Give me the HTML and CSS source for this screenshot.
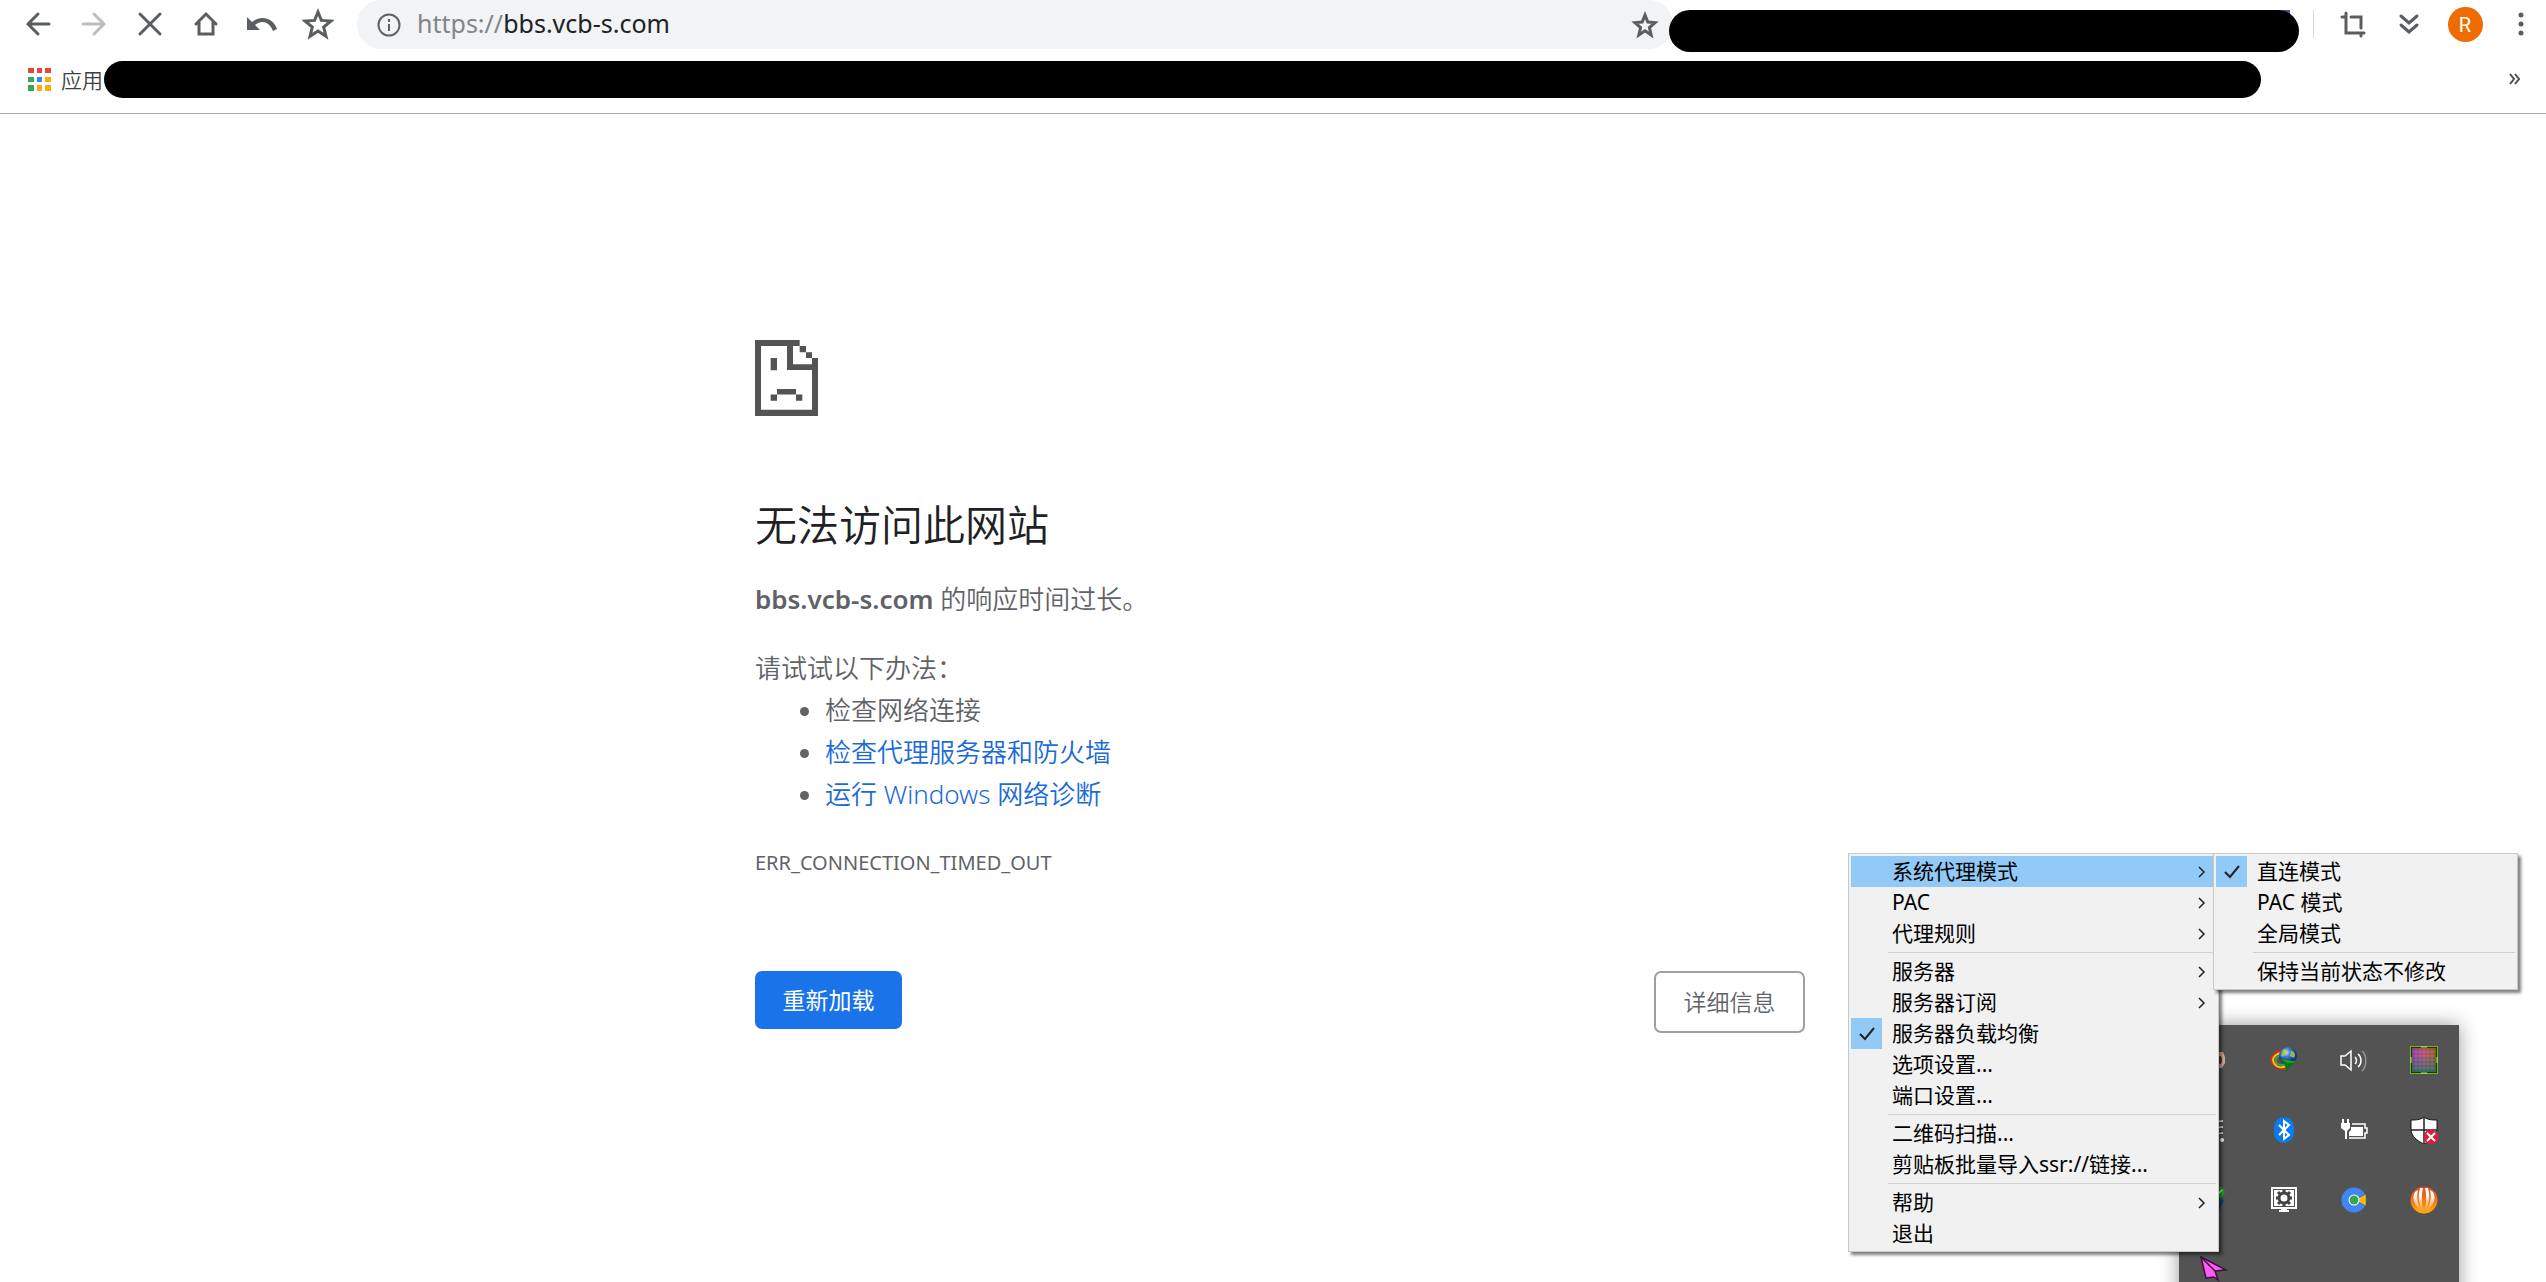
FILE: index.html
```html
<!DOCTYPE html>
<html lang="zh-CN">
<head>
<meta charset="utf-8">
<title>bbs.vcb-s.com</title>
<link rel="stylesheet" href="styles.css">
</head>
<body>
<header class="browser">
  <div class="toolbar">
    <nav class="nav-buttons">
      <button class="icon-btn" aria-label="后退"><svg viewBox="0 0 32 32"><path d="M27 16H6M16 6 6 16l10 10"/></svg></button>
      <button class="icon-btn faded" aria-label="前进"><svg viewBox="0 0 32 32"><path d="M5 16h21M16 6l10 10-10 10"/></svg></button>
      <button class="icon-btn" aria-label="停止"><svg viewBox="0 0 32 32"><path d="M6 6l20 20M26 6 6 26"/></svg></button>
      <button class="icon-btn" aria-label="主页"><svg viewBox="0 0 32 32"><path d="M6 16 16 6l10 10M9 14v12h14V14"/></svg></button>
      <button class="icon-btn" aria-label="撤销"><svg viewBox="0 0 32 32"><path class="solid" d="M1 9v13h13l-5-5c6-5 14-4 18 6l4-2C27 9 14 7 6 14z"/></svg></button>
      <button class="icon-btn" aria-label="收藏夹"><svg viewBox="0 0 32 32"><path class="star" d="m16 4 3.400 8.400 9.600.6-7.300 6 2.300 9.300-8-5.300-8 5.300L10.300 19 3 13l9.600-.6z"/></svg></button>
    </nav>
    <div class="omnibox">
      <svg class="info" viewBox="0 0 24 24"><circle cx="12" cy="12" r="10.500"/><path d="M12 11v7M12 6v3"/></svg>
      <div class="url"><span class="scheme">https://</span>bbs.vcb-s.com</div>
      <button class="bookmark" aria-label="为此标签页添加书签"><svg viewBox="0 0 32 32"><path class="star" d="m16 6 2.800 7 7.200.6-5.600 4.900 1.800 7.500-6.200-4.200L9.800 26l1.800-7.500L6 13.600l7.200-.6z"/></svg></button>
    </div>
    <div class="redacted extensions"></div>
    <div class="actions">
      <button class="icon-btn" aria-label="裁剪"><svg viewBox="0 0 32 32"><path d="M5 9h4M9 5v20h18M14 9h10v11M24 25v3"/></svg></button>
      <button class="icon-btn" aria-label="更多扩展"><svg viewBox="0 0 32 32"><path d="m8 8 8 7 8-7M8 17l8 7 8-7"/></svg></button>
      <button class="icon-btn" aria-label="用户"><span class="avatar">R</span></button>
      <button class="icon-btn" aria-label="菜单"><svg viewBox="0 0 32 32"><circle class="solid" cx="16" cy="7" r="2.500"/><circle class="solid" cx="16" cy="16" r="2.500"/><circle class="solid" cx="16" cy="25" r="2.500"/></svg></button>
    </div>
  </div>
  <div class="bookmarks">
    <a class="apps" href="#"><svg viewBox="0 0 23 23"><g fill="#ea4335"><path d="M0 0h6v5H0zM9 0h5v5H9zM17 0h6v5h-6z"/></g><g fill="#34a853"><path d="M0 9h6v5H0zM0 17h6v6H0z"/></g><path fill="#2b8cf5" d="M9 9h5v5H9z"/><path fill="#fbab0a" d="M17 9h6v5h-6zM9 17h5v6H9zM17 17h6v6h-6z"/></svg>应用</a>
    <div class="redacted saved"></div>
    <button class="overflow" aria-label="更多书签"><svg viewBox="0 0 12 12"><path d="m1 1 4 5-4 5M6 1l4 5-4 5"/></svg></button>
  </div>
</header>

<main class="error">
  <svg class="sad" viewBox="0 0 189 206" preserveAspectRatio="none"><path d="M0 0h134v16H18v173h153V81H96V16h18v50h57V49h18v157H0zM134 16h19v17h-19zM153 33h18v16h-18zM47 49h19v33H47zM66 133h57v15H66zM47 148h19v17H47zM123 148h19v17h-19z"/></svg>
  <h1>无法访问此网站</h1>
  <p class="reason"><strong>bbs.vcb-s.com</strong> 的响应时间过长。</p>
  <p class="try">请试试以下办法：</p>
  <ul>
    <li>检查网络连接</li>
    <li><a href="#">检查代理服务器和防火墙</a></li>
    <li><a href="#">运行 Windows 网络诊断</a></li>
  </ul>
  <p class="code">ERR_CONNECTION_TIMED_OUT</p>
  <div class="buttons">
    <button class="reload">重新加载</button>
    <button class="details">详细信息</button>
  </div>
</main>

<aside class="tray">
  <span class="cell"><svg viewBox="0 0 28 28"><path fill="#2b2522" d="M8 5c8-3 15 1 16 8s-4 9-10 9z"/><path fill="#d2ae97" d="M17 6h6l2 5v6l-3 5h-5z"/><ellipse cx="20" cy="14" rx="2" ry="4" fill="#4a3a33"/></svg></span>
  <span class="cell"><svg viewBox="0 0 28 28"><defs><radialGradient id="globe" cx=".4" cy=".3"><stop offset="0" stop-color="#dff0ff"/><stop offset=".4" stop-color="#4b8ad8"/><stop offset="1" stop-color="#123a8a"/></radialGradient></defs><g fill="none" stroke-width="2"><path stroke="#d62a1a" d="M14 5C5 4-1 12 2 17s10 7 15 5"/><path stroke="#f5c518" d="M13 7c-7 0-12 5-9 10s8 5 12 3"/><path stroke="#3fa535" d="M13 9c-6 0-8 4-7 7s6 4 10 2"/></g><circle cx="18" cy="10" r="9" fill="url(#globe)"/><path fill="#b9c94a" fill-opacity=".8" d="M13 4c4-2 6 1 3 4s-4 4-5 1zM21 5c4 0 5 4 3 7l-4-2z"/><path fill="#06780c" d="m10 13 18 3-7 3-5 7-1-7z"/><path fill="#22a52a" d="m10 13 18 3-10 1z"/></svg></span>
  <span class="cell"><svg viewBox="0 0 28 28"><g fill="none" stroke="#fff" stroke-width="1.500"><path d="M1 10h4l6-5v19l-6-5H1z"/><path d="M15 11c2 2 2 5 0 7M18 8c4 3 4 10 0 13"/><path stroke="#999" d="M22 5c5 4 5 15 0 20"/></g></svg></span>
  <span class="cell"><svg viewBox="0 0 28 28"><defs><linearGradient id="chipx"><stop offset="0" stop-color="#8c3aa0"/><stop offset=".5" stop-color="#b0506a"/><stop offset="1" stop-color="#8a5a20"/></linearGradient><linearGradient id="chipy" x2="0" y2="1"><stop offset=".3" stop-color="#2a5a70" stop-opacity="0"/><stop offset="1" stop-color="#2a6a60"/></linearGradient></defs><path fill="#1d3307" stroke="#76b900" d="M.5.5h27v27H.5z"/><path fill="url(#chipx)" d="M2 2h24v24H2z"/><path fill="url(#chipy)" d="M2 2h24v24H2z"/><path stroke="#c8b0c8" stroke-opacity=".25" d="M6 3v22M10 3v22M14 3v22M18 3v22M22 3v22M3 6h22M3 10h22M3 14h22M3 18h22M3 22h22"/><path stroke="#c5ea60" d="M11 1h6M11 27h6M1 11v6M27 11v6"/></svg></span>
  <span class="cell"><svg viewBox="0 0 28 28"><g fill="none" stroke="#fff" stroke-width="1.500"><path d="M3 23C3 10 12 5 23 5M8 23c0-8 6-12 15-12M13 23c0-4 4-6 10-6"/></g><circle cx="22" cy="24" r="2" fill="#fff"/></svg></span>
  <span class="cell"><svg viewBox="0 0 28 28"><rect x="4" y="1" width="20" height="26" rx="10" fill="#0a7cf0"/><path fill="none" stroke="#fff" stroke-width="2" d="m9 9 10 10-5 4V5l5 4L9 19"/></svg></span>
  <span class="cell"><svg viewBox="0 0 28 28"><path fill="#fff" d="M2 3h2v4h3V3h2v4h1v5l-3 3v8H5v-8l-4-3V7h1z"/><path fill="none" stroke="#fff" stroke-width="1.500" d="M12 8h13v4h2v5h-2v5H9"/><path fill="#fff" d="M11 11h12v9H9v-4l2-2z"/></svg></span>
  <span class="cell"><svg viewBox="0 0 28 28"><path fill="#fff" stroke="#111" d="M14 1c4 3 8 3 13 3v9c0 7-6 12-13 15C7 25 1 20 1 13V4c5 0 9 0 13-3z"/><path stroke="#222" stroke-width="1.500" d="M14 1v26M1 14h26"/><circle cx="21" cy="21" r="7.500" fill="#d91f36"/><path stroke="#fff" stroke-width="2" d="m17 17 8 8M25 17l-8 8"/></svg></span>
  <span class="cell"><svg viewBox="0 0 28 28"><path fill="#0a4a86" d="M10 9l14 5-6 13-8-5z"/><circle cx="19" cy="6" r="5.500" fill="#1bab1b"/><path fill="none" stroke="#fff" stroke-width="1.500" d="m16 6 2 2 4-4"/></svg></span>
  <span class="cell"><svg viewBox="0 0 28 28"><path fill="none" stroke="#fff" stroke-width="2" d="M2 2h24v20H2z"/><path fill="#fff" d="M4 4h20v16H4zM11 22h6v2h2v2H9v-2h2z"/><circle cx="14" cy="12" r="5" fill="#fff" stroke="#444" stroke-width="3"/><path stroke="#444" stroke-width="3" d="M14 4v3M14 17v3M6 12h3M19 12h3M8 6l3 3M17 15l3 3M20 6l-3 3M11 15l-3 3"/><circle cx="14" cy="12" r="2.500" fill="#fff"/></svg></span>
  <span class="cell"><svg viewBox="0 0 28 28"><circle cx="14" cy="14" r="12.500" fill="#4285f4"/><path fill="#fbbc05" stroke="#535353" stroke-width=".5" d="m17 13 9-5v12l-9-5z"/><circle cx="14" cy="14" r="5.500" fill="#fff"/><circle cx="14" cy="14" r="4.500" fill="#34a853"/></svg></span>
  <span class="cell"><svg viewBox="0 0 28 28"><defs><linearGradient id="shell" x2="0" y2="1"><stop offset="0" stop-color="#e0461c"/><stop offset="1" stop-color="#ffab12"/></linearGradient><linearGradient id="ribs" x2="0" y2="1"><stop offset=".3" stop-color="#fff"/><stop offset="1" stop-color="#fff" stop-opacity="0"/></linearGradient></defs><circle cx="14" cy="14" r="13.500" fill="url(#shell)"/><path fill="url(#ribs)" d="M12 26C5 19 1 13 5 6l3-2C6 12 8 19 12 26zM13 26C8 16 8 9 10 2h3c-2 8-1 16 0 24zM15 26c1-8 2-16 0-24h3c2 7 2 14-3 24zM16 26c4-7 6-14 4-22l3 2c4 7 0 13-7 20z"/></svg></span>
  <span class="cell"><svg viewBox="0 0 28 28"><path fill="#ff5cf4" stroke="#3a1040" stroke-width="1.500" d="m1 1 25 13-11 1 3 9-4-3-8 1z"/><path fill="none" stroke="#3a1040" stroke-width="1.500" d="m1 1 14 14"/></svg></span>
</aside>

<menu class="popup main-menu">
  <li><button class="item active">系统代理模式<svg class="arrow" viewBox="0 0 8 14"><path d="m1 2 5 5-5 5"/></svg></button></li>
  <li><button class="item">PAC<svg class="arrow" viewBox="0 0 8 14"><path d="m1 2 5 5-5 5"/></svg></button></li>
  <li><button class="item">代理规则<svg class="arrow" viewBox="0 0 8 14"><path d="m1 2 5 5-5 5"/></svg></button></li>
  <li class="sep"></li>
  <li><button class="item">服务器<svg class="arrow" viewBox="0 0 8 14"><path d="m1 2 5 5-5 5"/></svg></button></li>
  <li><button class="item">服务器订阅<svg class="arrow" viewBox="0 0 8 14"><path d="m1 2 5 5-5 5"/></svg></button></li>
  <li><button class="item checked"><svg class="tick" viewBox="0 0 31 31"><path d="m9 16 5 5 9-11"/></svg>服务器负载均衡</button></li>
  <li><button class="item">选项设置...</button></li>
  <li><button class="item">端口设置...</button></li>
  <li class="sep"></li>
  <li><button class="item">二维码扫描...</button></li>
  <li><button class="item">剪贴板批量导入ssr://链接...</button></li>
  <li class="sep"></li>
  <li><button class="item">帮助<svg class="arrow" viewBox="0 0 8 14"><path d="m1 2 5 5-5 5"/></svg></button></li>
  <li><button class="item">退出</button></li>
</menu>

<menu class="popup sub-menu">
  <li><button class="item checked"><svg class="tick" viewBox="0 0 31 31"><path d="m9 16 5 5 9-11"/></svg>直连模式</button></li>
  <li><button class="item">PAC 模式</button></li>
  <li><button class="item">全局模式</button></li>
  <li class="sep"></li>
  <li><button class="item">保持当前状态不修改</button></li>
</menu>
</body>
</html>
```
FILE: styles.css
```css
* {
  box-sizing: border-box;
}

html {
  height: 100%;
}

body {
  position: relative;
  min-height: 100%;
  margin: 0;
  overflow: hidden;
  background: #fff;
  color: #5f6368;
  font-family: "Noto Sans", "Noto Sans CJK SC", sans-serif;
  font-weight: 400;
}

button {
  margin: 0;
  padding: 0;
  border: 0;
  background: none;
  color: inherit;
  font: inherit;
}

a {
  color: #1a6ad8;
  text-decoration: none;
}

/* Browser chrome */
.browser {
  border-bottom: 1px solid #a8abad;
}

.toolbar {
  display: flex;
  align-items: flex-start;
  height: 49px;
}

.nav-buttons,
.actions {
  display: flex;
}

.nav-buttons {
  padding-left: 10px;
}

.icon-btn {
  display: grid;
  place-items: center;
  width: 56px;
  height: 48px;
}

.icon-btn svg,
.bookmark svg {
  width: 32px;
  height: 32px;
  fill: none;
  stroke: #5a5d61;
  stroke-linecap: round;
  stroke-width: 3;
}

.icon-btn .solid {
  fill: #5a5d61;
  stroke: none;
}

.faded {
  opacity: .4;
}

.omnibox {
  display: flex;
  flex: 1;
  align-items: center;
  height: 49px;
  margin-left: 11px;
  padding: 0 12px 0 20px;
  border-radius: 25px;
  background: #f1f3f4;
}

.info {
  width: 24px;
  height: 24px;
  fill: none;
  stroke: #5f6368;
  stroke-width: 2;
}

.url {
  flex: 1;
  margin-left: 16px;
  padding-bottom: 3px;
  color: #202124;
  font-size: 25px;
  line-height: 46px;
}

.scheme {
  color: #80868b;
}

.bookmark svg {
  display: block;
}

.redacted {
  background: #000;
}

.extensions {
  position: relative;
  width: 630px;
  height: 42px;
  margin: 10px 14px 0 -4px;
  border-radius: 21px;
}

.extensions::before {
  position: absolute;
  z-index: -1;
  top: 0;
  right: 9px;
  width: 12px;
  height: 10px;
  background: #5b4a9a;
  content: "";
}

.actions {
  margin-right: -3px;
  padding-left: 12px;
  background: linear-gradient(#d5d7da, #d5d7da) 0 50% / 1px 28px no-repeat;
}

.avatar {
  width: 35px;
  height: 35px;
  border-radius: 50%;
  background: #ef6c00;
  color: #fff;
  font: 20px/36px Roboto, sans-serif;
  text-align: center;
}

.star {
  stroke-linecap: butt;
}

.bookmarks {
  display: flex;
  align-items: center;
  height: 64px;
  padding: 0 20px 4px 28px;
}

.apps {
  display: flex;
  align-items: center;
  gap: 10px;
  width: 76px;
  color: #3c4043;
  font-size: 21px;
  font-weight: 350;
  white-space: nowrap;
}

.apps svg {
  width: 23px;
  height: 23px;
}

.saved {
  flex: 1;
  height: 37px;
  border-radius: 19px;
}

.overflow {
  display: grid;
  place-items: center;
  width: 22px;
  margin-left: 243px;
}

.overflow svg {
  width: 12px;
  height: 12px;
  fill: none;
  stroke: #4a4d51;
  stroke-width: 2;
}

/* Error page */
.error {
  width: 1064px;
  max-width: 100%;
  margin: 0 auto;
  padding: 226px 0 0 14px;
  font-size: 26px;
  font-weight: 350;
  line-height: 42px;
}

.sad {
  display: block;
  width: 63px;
  height: 76px;
  fill: #545454;
}

h1 {
  margin: 79px 0 0;
  color: #202124;
  font-size: 42px;
  font-weight: 350;
  line-height: 60px;
}

p,
ul {
  margin: 0;
}

.reason {
  margin-top: 23px;
}

.reason strong {
  font-weight: 650;
}

.try {
  margin-top: 27px;
}

ul {
  padding-left: 70px;
}

.code {
  margin-top: 27px;
  font-size: 20px;
  font-weight: 400;
}

.buttons {
  display: flex;
  align-items: flex-start;
  justify-content: space-between;
  margin-top: 87px;
  font-size: 23px;
}

.reload,
.details {
  border-radius: 7px;
}

.reload {
  width: 147px;
  height: 58px;
  background: #1a73e8;
  color: #fff;
  font-weight: 400;
}

.details {
  width: 151px;
  height: 62px;
  border: 2px solid #9aa0a6;
}

/* Notification area flyout */
.tray {
  position: absolute;
  top: 1025px;
  right: 87px;
  display: grid;
  grid-template-columns: repeat(4, 70px);
  grid-auto-rows: 70px;
  background: #535353;
  box-shadow: 0 0 18px rgba(0, 0, 0, .4);
}

.cell {
  display: grid;
  place-items: center;
}

.cell svg {
  width: 28px;
  height: 28px;
}

/* Context menus */
.popup {
  position: absolute;
  top: 853px;
  margin: 0;
  padding: 2px;
  border: 1px solid #c8c8c8;
  background: #f1f1f1;
  box-shadow: 3px 3px 3px rgba(0, 0, 0, .5);
  color: #000;
  font-size: 21px;
  list-style: none;
}

.main-menu {
  right: 327px;
  width: 371px;
}

.sub-menu {
  right: 28px;
  width: 305px;
}

.item {
  display: flex;
  align-items: center;
  width: 100%;
  height: 31px;
  padding: 0 10px 0 41px;
  line-height: 31px;
  white-space: pre;
}

.active {
  background: #91c9f7;
}

.arrow {
  width: 8px;
  height: 14px;
  margin-left: auto;
  fill: none;
  stroke: #222;
  stroke-width: 1.5;
}

.tick {
  width: 31px;
  height: 31px;
  margin: 0 10px 0 -41px;
  background: #91c9f7;
  fill: none;
  stroke: #222;
  stroke-width: 2;
}

.sep {
  height: 7px;
  margin-left: 37px;
  background: linear-gradient(#d2d2d2, #d2d2d2) 0 50% / 100% 1px no-repeat;
}
```
